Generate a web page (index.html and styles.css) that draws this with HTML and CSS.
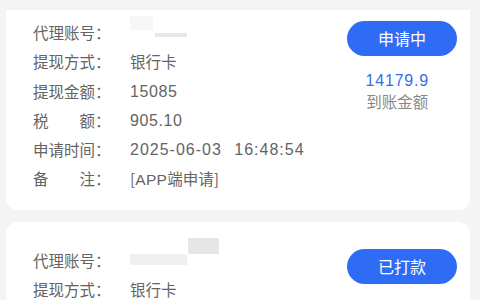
FILE: index.html
```html
<!DOCTYPE html>
<html lang="zh-CN">
<head>
<meta charset="utf-8">
<link rel="stylesheet" href="styles.css">
</head>
<body>
<div class="page">
  <div class="viewport">
    <div class="list">
      <div class="card">
        <div class="info">
          <div class="row"><span class="label">代理账号：</span><span class="value masked"><i class="m m1"></i><i class="m m2"></i></span></div>
          <div class="row"><span class="label">提现方式：</span><span class="value">银行卡</span></div>
          <div class="row"><span class="label">提现金额：</span><span class="value latin">15085</span></div>
          <div class="row"><span class="label">税&emsp;&emsp;额：</span><span class="value latin">905.10</span></div>
          <div class="row"><span class="label">申请时间：</span><span class="value latin date">2025-06-03 16:48:54</span></div>
          <div class="row"><span class="label">备&emsp;&emsp;注：</span><span class="value">[<span class="latin">APP</span>端申请]</span></div>
        </div>
        <div class="side">
          <div class="status">申请中</div>
          <div class="amount">
            <div class="num">14179.9</div>
            <div class="cap">到账金额</div>
          </div>
        </div>
      </div>
      <div class="card">
        <div class="info">
          <div class="row"><span class="label">代理账号：</span><span class="value masked"><i class="m m3"></i><i class="m m4"></i></span></div>
          <div class="row"><span class="label">提现方式：</span><span class="value">银行卡</span></div>
          <div class="row"><span class="label">提现金额：</span><span class="value latin">15085</span></div>
        </div>
        <div class="side">
          <div class="status">已打款</div>
        </div>
      </div>
    </div>
  </div>
</div>
</body>
</html>
```
FILE: styles.css
```css
* { box-sizing: border-box; }
html, body { margin: 0; padding: 0; }
body {
  background: #f4f4f5;
  font-family: "Noto Sans CJK SC", "Noto Sans", sans-serif;
  width: 480px;
  height: 300px;
  overflow: hidden;
}
.page {
  padding-top: 10px;
  height: 300px;
}
.viewport {
  height: 290px;
  overflow: hidden;
}
.list {
  margin-top: -16px;
  padding: 0 10px 0 6px;
  display: flex;
  flex-direction: column;
  gap: 12px;
}
.card {
  background: #fff;
  border-radius: 12px;
  padding: 24px 13px 15px 27px;
  display: flex;
  justify-content: space-between;
}
.info { display: flex; flex-direction: column; }
.row {
  display: flex;
  line-height: 29.3px;
  font-size: 15.5px;
  color: #666;
}
.label { width: 97px; flex: none; color: #636363; }
.value { color: #646464; }
.latin {
  font-family: "Liberation Sans", "Noto Sans CJK SC", sans-serif;
  font-size: 16px;
  letter-spacing: 0.6px;
}
.value .latin { font-size: 15.5px; letter-spacing: 0.3px; }
.date { letter-spacing: 1px; word-spacing: 7px; }
.masked { position: relative; width: 100px; }
.m { position: absolute; display: block; background: #ececec; }
.m1 { left: 0; top: -2px; width: 23px; height: 14px; background: #f7f7f7; }
.m2 { left: 25px; top: 15px; width: 32px; height: 4px; background: #e8e8e8; }
.m3 { left: 58px; top: -8px; width: 31px; height: 16px; background: #e6e6e6; }
.m4 { left: 0; top: 8px; width: 57px; height: 11px; background: #f0f0f0; }
.side {
  display: flex;
  flex-direction: column;
  align-items: flex-end;
  padding-top: 3px;
}
.status {
  width: 110px;
  height: 35px;
  border-radius: 18px;
  background: #2f6cf5;
  color: #fff;
  font-size: 16px;
  line-height: 35px;
  text-align: center;
}
.amount {
  margin-top: 15px;
  margin-right: 28px;
  text-align: center;
  font-size: 15.5px;
  line-height: 20px;
}
.num {
  color: #356de8;
  font-family: "Liberation Sans", sans-serif;
  font-size: 16px;
  letter-spacing: 0.8px;
}
.cap { color: #888; }
```
